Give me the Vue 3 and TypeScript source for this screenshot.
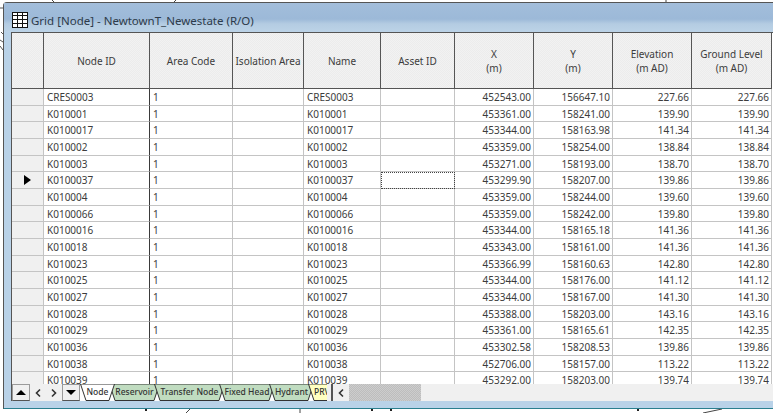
<script setup lang="ts">
interface NodeRow {
  id: string
  x: string
  y: string
  level: string
}

const rows: NodeRow[] = [
  { id: 'CRES0003', x: '452543.00', y: '156647.10', level: '227.66' },
  { id: 'K010001', x: '453361.00', y: '158241.00', level: '139.90' },
  { id: 'K0100017', x: '453344.00', y: '158163.98', level: '141.34' },
  { id: 'K010002', x: '453359.00', y: '158254.00', level: '138.84' },
  { id: 'K010003', x: '453271.00', y: '158193.00', level: '138.70' },
  { id: 'K0100037', x: '453299.90', y: '158207.00', level: '139.86' },
  { id: 'K010004', x: '453359.00', y: '158244.00', level: '139.60' },
  { id: 'K0100066', x: '453359.00', y: '158242.00', level: '139.80' },
  { id: 'K0100016', x: '453344.00', y: '158165.18', level: '141.36' },
  { id: 'K010018', x: '453343.00', y: '158161.00', level: '141.36' },
  { id: 'K010023', x: '453366.99', y: '158160.63', level: '142.80' },
  { id: 'K010025', x: '453344.00', y: '158176.00', level: '141.12' },
  { id: 'K010027', x: '453344.00', y: '158167.00', level: '141.30' },
  { id: 'K010028', x: '453388.00', y: '158203.00', level: '143.16' },
  { id: 'K010029', x: '453361.00', y: '158165.61', level: '142.35' },
  { id: 'K010036', x: '453302.58', y: '158208.53', level: '139.86' },
  { id: 'K010038', x: '452706.00', y: '158157.00', level: '113.22' },
  { id: 'K010039', x: '453292.00', y: '158203.00', level: '139.74' },
]

const headers = [
  ['Node ID'],
  ['Area Code'],
  ['Isolation Area'],
  ['Name'],
  ['Asset ID'],
  ['X', '(m)'],
  ['Y', '(m)'],
  ['Elevation', '(m AD)'],
  ['Ground Level', '(m AD)'],
]

const tabs = [
  { label: 'Node', width: 35, kind: 'active' },
  { label: 'Reservoir', width: 51, kind: 'green' },
  { label: 'Transfer Node', width: 71, kind: 'green' },
  { label: 'Fixed Head', width: 56, kind: 'green' },
  { label: 'Hydrant', width: 45, kind: 'green' },
  { label: 'PRV', width: 45, kind: 'yellow' },
]

const selectedRow = 5
const tabPoints = (w: number) => `0.5,0 6,16.5 ${w - 6},16.5 ${w - 0.5},0`
</script>

<template>
  <div class="desktop">
    <svg class="backdrop" width="773" height="413" viewBox="0 0 773 413">
      <path d="M0 8H3M1 32L3 34M0 40L3 42M0 46L3 50" stroke="#555" fill="none" />
      <path d="M52 0L54 2M174 2L176 0M666 0V3" stroke="#444" fill="none" />
      <path d="M146 409V411M372 409V411M391 409V411M638 409V411" stroke="#222" stroke-width="2" fill="none" />
      <path d="M186 413L190 409M300 409V413M703 413L722 409" stroke="#444" fill="none" />
    </svg>

    <div class="window">
      <div class="titlebar">
        <svg class="grid-icon" width="16" height="16" viewBox="0 0 16 16">
          <rect x="0.5" y="0.5" width="15" height="15" fill="#fff" stroke="#111" />
          <path d="M0 3.5H16M0 7.5H16M0 11.5H16M5.5 0V16M10.5 0V16" stroke="#111" fill="none" />
        </svg>
        <span class="title">Grid [Node] - NewtownT_Newestate (R/O)</span>
      </div>

      <div class="content">
        <div class="sheet">
          <div class="cell head corner"></div>
          <div v-for="(lines, i) in headers" :key="i" class="cell head">
            <span v-for="line in lines" :key="line">{{ line }}</span>
          </div>

          <template v-for="(row, r) in rows" :key="row.id">
            <div class="cell indicator">
              <span v-if="r === selectedRow" class="arrow"></span>
            </div>
            <div class="cell text frozen">{{ row.id }}</div>
            <div class="cell text">1</div>
            <div class="cell text"></div>
            <div class="cell text">{{ row.id }}</div>
            <div class="cell text" :class="{ selected: r === selectedRow }"></div>
            <div class="cell num">{{ row.x }}</div>
            <div class="cell num">{{ row.y }}</div>
            <div class="cell num">{{ row.level }}</div>
            <div class="cell num">{{ row.level }}</div>
          </template>
        </div>

        <div class="footer">
          <div class="nav">
            <button class="nav-btn boxed"><span class="tri up"></span></button>
            <button class="nav-btn">
              <svg width="8" height="10" viewBox="0 0 8 10"><path d="M6 1.5L2.5 5L6 8.5" stroke="#333" stroke-width="1.6" fill="none" /></svg>
            </button>
            <button class="nav-btn">
              <svg width="8" height="10" viewBox="0 0 8 10"><path d="M2 1.5L5.5 5L2 8.5" stroke="#333" stroke-width="1.6" fill="none" /></svg>
            </button>
            <button class="nav-btn boxed"><span class="tri down"></span></button>
          </div>

          <div class="tabs">
            <div
              v-for="tab in tabs"
              :key="tab.label"
              class="tab"
              :class="tab.kind"
              :style="{ width: tab.width + 'px' }"
            >
              <svg class="tab-shape" :width="tab.width" height="17">
                <polygon :points="tabPoints(tab.width)" />
              </svg>
              <span class="tab-label">{{ tab.label }}</span>
            </div>
          </div>

          <div class="splitter"></div>
          <div class="scroll-left">
            <svg width="8" height="10" viewBox="0 0 8 10"><path d="M6 1.5L2.5 5L6 8.5" stroke="#333" stroke-width="1.6" fill="none" /></svg>
          </div>
          <div class="scroll-thumb"></div>
        </div>
      </div>
    </div>
  </div>
</template>

<style>
html,
body {
  margin: 0;
  overflow: hidden;
  background: #fff;
}
</style>

<style scoped>
.desktop {
  position: relative;
  width: 773px;
  height: 413px;
  overflow: hidden;
  background: #fff;
  font-family: "Noto Sans", "Open Sans", sans-serif;
  color: #3c3c3c;
}

.backdrop {
  position: absolute;
  inset: 0;
}

.window {
  position: relative;
  display: flex;
  flex-direction: column;
  box-sizing: border-box;
  width: 770px;
  height: 407px;
  margin: 2px 0 0 3px;
  padding: 0 0 7px 7px;
  background: #b9d2e8;
  border: 1px solid #555;
  border-width: 1px 0 1px 1px;
  border-bottom-color: #2a7f8f;
  border-top-left-radius: 4px;
}

.titlebar {
  display: flex;
  flex: none;
  align-items: center;
  gap: 3px;
  box-sizing: border-box;
  height: 29px;
  margin-left: -7px;
  padding: 5px 0 0 8px;
  background: linear-gradient(#a3bedb 0%, #9cb9d8 55%, #b4cce2 72%, #bcd3e7 100%);
}

.grid-icon {
  flex: none;
}

.title {
  margin-top: 1px;
  font-size: 11.5px;
  color: #2d3b4a;
  white-space: nowrap;
}

.content {
  display: flex;
  flex: 1;
  flex-direction: column;
  min-height: 0;
  border-top: 1px solid #555;
  border-left: 1px solid #555;
}

.sheet {
  display: grid;
  flex: 1;
  grid-template-columns: 32px 106px 83px 71px 77px 74px 79px 79px 79px 80px 10px;
  grid-template-rows: 56px;
  grid-auto-rows: 16.67px;
  min-height: 0;
  overflow: hidden;
  background: #fff;
}

.cell {
  box-sizing: border-box;
  border-right: 1px solid #c4c4c4;
  border-bottom: 1px solid #c4c4c4;
  font-size: 10px;
  line-height: 17px;
  white-space: nowrap;
  overflow: hidden;
}

.head {
  display: flex;
  flex-direction: column;
  align-items: center;
  justify-content: center;
  border-right: 1px solid #555;
  border-bottom: 1px solid #555;
  background: repeating-conic-gradient(#f2f2f2 0 25%, #ececec 0 50%) 0 0 / 2px 2px;
  line-height: 14px;
}

.indicator {
  display: flex;
  align-items: center;
  justify-content: center;
  grid-column-start: 1;
  background: #f0f0f0;
}

.arrow {
  width: 0;
  height: 0;
  border-top: 5px solid transparent;
  border-bottom: 5px solid transparent;
  border-left: 7px solid #000;
}

.text {
  padding-left: 3px;
}

.frozen {
  border-right-color: #3a3a3a;
}

.num {
  padding-right: 2px;
  text-align: right;
}

.selected {
  outline: 1px dotted #444;
  outline-offset: -1px;
}

.footer {
  position: relative;
  display: flex;
  flex: none;
  align-items: stretch;
  height: 17px;
  background: #f0f0f0;
}

.nav {
  display: flex;
  flex: none;
  width: 68px;
}

.nav-btn {
  display: flex;
  flex: 1;
  align-items: center;
  justify-content: center;
  padding: 0;
  background: transparent;
  border: 0;
}

.nav-btn.boxed {
  border: 1px solid #9a9a9a;
  border-bottom-color: #555;
}

.tri {
  width: 0;
  height: 0;
  border-right: 5px solid transparent;
  border-left: 5px solid transparent;
}

.tri.up {
  border-bottom: 5px solid #000;
}

.tri.down {
  border-top: 5px solid #000;
}

.tabs {
  display: flex;
  flex: none;
  width: 247px;
  overflow: hidden;
  background: #fff;
}

.tab {
  position: relative;
  flex: none;
  height: 17px;
  margin-right: -6px;
}

.tab-shape {
  position: absolute;
  inset: 0;
}

.tab-shape polygon {
  stroke: #333;
  stroke-width: 1;
}

.tab.active {
  z-index: 1;
}

.active polygon {
  fill: #fff;
}

.green polygon {
  fill: #c0dcc0;
}

.yellow polygon {
  fill: #ffffc0;
}

.tab-label {
  position: absolute;
  inset: 0;
  text-align: center;
  font-size: 8.5px;
  font-weight: 500;
  line-height: 15px;
  white-space: nowrap;
  color: #333;
}

.yellow .tab-label {
  padding-left: 6px;
  text-align: left;
}

.splitter {
  flex: none;
  width: 2px;
  margin-left: 4px;
  background: #555;
}

.scroll-left {
  display: flex;
  flex: none;
  align-items: center;
  justify-content: center;
  width: 16px;
}

.scroll-thumb {
  flex: none;
  width: 72px;
  background: repeating-conic-gradient(#cdcdcd 0 25%, #bdbdbd 0 50%) 0 0 / 2px 2px;
}
</style>
